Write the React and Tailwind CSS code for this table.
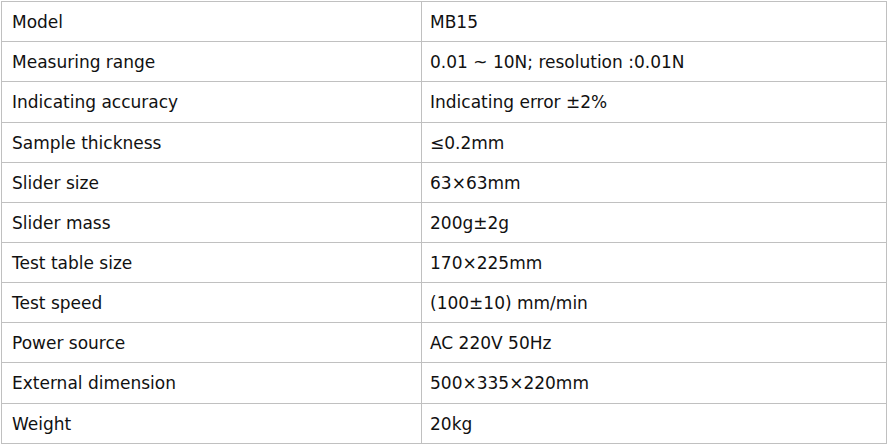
import React from "react";

const rows = [
  ["Model", "MB15", "h-[40px]"],
  ["Measuring range", "0.01 ~ 10N; resolution :0.01N", "h-[40px]"],
  ["Indicating accuracy", "Indicating error ±2%", "h-[41px]"],
  ["Sample thickness", "≤0.2mm", "h-[40px]"],
  ["Slider size", "63×63mm", "h-[40px]"],
  ["Slider mass", "200g±2g", "h-[40px]"],
  ["Test table size", "170×225mm", "h-[40px]"],
  ["Test speed", "(100±10) mm/min", "h-[40px]"],
  ["Power source", "AC 220V 50Hz", "h-[40px]"],
  ["External dimension", "500×335×220mm", "h-[41px]"],
  ["Weight", "20kg", "h-[39px]"],
];

export default function App() {
  return (
    <div className="w-[890px] h-[446px] bg-white pt-[1px] pl-[1px]">
      <div
        className="w-[886px] border border-[#c0c0c0] text-[17px] text-[#111]"
        style={{ fontFamily: '"DejaVu Sans", sans-serif' }}
      >
        {rows.map(([k, v, h], i) => (
          <div
            key={k}
            className={`flex ${h} ${i < rows.length - 1 ? "border-b border-[#c0c0c0]" : ""}`}
          >
            <div className="w-[420px] border-r border-[#c0c0c0] flex items-center pl-[10px] pt-[2px]">
              {k}
            </div>
            <div className="flex-1 flex items-center pl-[8px] pt-[2px]">{v}</div>
          </div>
        ))}
      </div>
    </div>
  );
}
